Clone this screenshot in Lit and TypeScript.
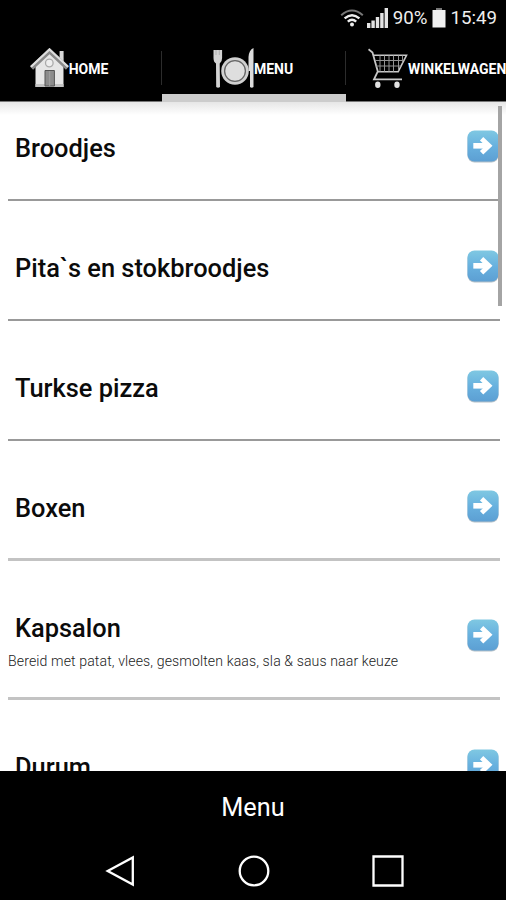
import { LitElement, html, css, svg } from "lit";
import { customElement } from "lit/decorators.js";
import { classMap } from "lit/directives/class-map.js";

interface MenuItem {
  title: string;
  description?: string;
  size: "first" | "normal" | "tall";
  soft?: boolean;
}

const ITEMS: MenuItem[] = [
  { title: "Broodjes", size: "first" },
  { title: "Pita`s en stokbroodjes", size: "normal" },
  { title: "Turkse pizza", size: "normal" },
  { title: "Boxen", size: "normal", soft: true },
  { title: "Kapsalon", description: "Bereid met patat, vlees, gesmolten kaas, sla & saus naar keuze", size: "tall", soft: true },
  { title: "Durum", size: "normal" },
];

const wifiIcon = html`<svg class="wifi" width="24" height="18" viewBox="0 0 24 18" fill="none">
  <path d="M1.2 6.2Q12-3.2 22.8 6.2" stroke="#777" stroke-width="2" />
  <path d="M4.6 9.4Q12 3 19.4 9.4" stroke="#eee" stroke-width="2.4" />
  <path d="M7.8 12.7Q12 9 16.2 12.7" stroke="#eee" stroke-width="2.4" />
  <circle cx="12" cy="15.4" r="2" fill="#eee" />
</svg>`;

const signalIcon = html`<svg class="signal" width="21" height="20" viewBox="0 0 21 20" fill="#e4e4e4">
  <path d="M0 15h3.400v5H0zM4.400 12.500h3.400V20H4.400zM8.800 9h3.400v11H8.800zM13.200 5h3.400v15h-3.400zM17.600 0H21v20h-3.400z" />
</svg>`;

const batteryIcon = html`<svg class="battery" width="14" height="20" viewBox="0 0 14 20">
  <path d="M4 0h6v2H4z" fill="#777" />
  <path d="M.5 2h13v17.500H.5z" fill="#f0f0f0" />
</svg>`;

const houseIcon = html`<svg width="39" height="40" viewBox="0 0 39 40">
  <path d="M29.600 3h4v11l-4-4z" fill="#d8d8d8" />
  <path d="M5.500 18L19.500 5l14 13v21h-28z" fill="#e6e6e6" />
  <path d="M5.500 36h28v3h-28z" fill="#c4c4c4" />
  <path d="M1.500 20L19.500 3l18 17" fill="none" stroke="#8a8a8a" stroke-width="4.600" />
  <path d="M1 18.800L19.500 1.500l18.500 17.300" fill="none" stroke="#dedede" stroke-width="2.200" />
  <circle cx="19.300" cy="15" r="3.800" fill="#eee" stroke="#aaa" stroke-width="1.300" />
  <path d="M15 22.500h9.400V38H15z" fill="#8c8c8c" stroke="#555" stroke-width="1" />
  <path d="M19.700 23v15" stroke="#a2a2a2" stroke-width="1" />
</svg>`;

const plateIcon = html`<svg width="41" height="41" viewBox="0 0 41 41">
  <path d="M.5 2h8.600v8q0 4-2.400 5.500L7 39q-2 1.600-3.800 0L3 15.500Q.5 14 .5 10z" fill="#d4d4d4" />
  <path d="M3 2v5M6.300 2v5" stroke="#999" stroke-width=".6" />
  <circle cx="22" cy="23" r="13.800" fill="#d0d0d0" />
  <circle cx="22" cy="23" r="10.400" fill="#dedede" stroke="#666" stroke-width="1.300" />
  <path d="M40.500 0v39q-1.700 1.600-3.500 0V23h-1.500V9Q36 2 40.500 0z" fill="#dcdcdc" />
</svg>`;

const cartIcon = html`<svg width="41" height="41" viewBox="0 0 41 41" fill="none" stroke="#c8c8c8">
  <path d="M.5 1.300L4.500 4.500l5.300 19-3.800 7.800h28" stroke-width="1.800" />
  <path d="M5 7.300h33.500l-8.300 16.400H10" stroke-width="1.600" />
  <path d="M7 12.500h28.500M8 18h25M12 7.500v16M16.500 7.500v16M21 7.500v16M25.500 7.500v16M30.500 7.500v15M34.500 7.500v7" stroke="#929292" stroke-width="1" />
  <ellipse cx="9.800" cy="36.800" rx="2.700" ry="3.200" fill="#e2e2e2" stroke="none" />
  <ellipse cx="29" cy="36.800" rx="2.700" ry="3.200" fill="#e2e2e2" stroke="none" />
</svg>`;

const arrowGlyph = svg`<path d="M6.300 15.800h15" stroke="#fff" stroke-width="5.600" />
  <path d="M14.600 8.800L22 15.800l-7.400 7" fill="none" stroke="#fff" stroke-width="4.800" />`;

@customElement("category-row")
export class CategoryRow extends LitElement {
  static properties = { item: { attribute: false } };
  declare item: MenuItem;

  static styles = css`
    :host { display: block; }
    .row {
      box-sizing: border-box;
      display: flex;
      justify-content: space-between;
      height: 119.8px;
      padding-top: 47px;
      border-bottom: 2px solid #999;
    }
    .first { height: 99.2px; padding-top: 26px; }
    .tall { height: 138.4px; }
    .soft { border-bottom: 3px solid #c3c3c3; }
    .soft:not(.tall) { height: 120.4px; }
    .title {
      padding-left: 7px;
      font-size: 25.4px;
      font-weight: 500;
      line-height: 40px;
      color: #0b0b0b;
      white-space: pre;
    }
    .description { font-size: 14.1px; line-height: 20px; margin-top: 3px; font-weight: 300; letter-spacing: 0.11px; color: #222; white-space: nowrap; }
    .arrow {
      flex: none;
      width: 32px;
      height: 33px;
      margin: 2px 1.5px 0 0;
    }
    .tall .arrow { margin-top: 11px; }
  `;

  render() {
    const { title, description, size, soft } = this.item;
    return html`<div class=${classMap({ row: true, [size]: true, soft: !!soft })}>
      <div class="text">
        <div class="title">${title}</div>
        ${description ? html`<div class="description">${description}</div>` : null}
      </div>
      <svg class="arrow" viewBox="0 0 32 33">
        <defs>
          <linearGradient id="blue" x1="0" y1="0" x2="0" y2="1">
            <stop offset="0" stop-color="#7fc8e2" />
            <stop offset=".5" stop-color="#68b1df" />
            <stop offset="1" stop-color="#5c9fd3" />
          </linearGradient>
        </defs>
        <rect x=".5" y="1.500" width="31" height="31" rx="7" fill="#b4c0c8" />
        <rect x=".5" y=".5" width="31" height="31" rx="7" fill="url(#blue)" />
        ${arrowGlyph}
      </svg>
    </div>`;
  }
}

@customElement("app-root")
export class AppRoot extends LitElement {
  static styles = css`
    :host {
      display: flex;
      flex-direction: column;
      width: 506px;
      height: 900px;
      overflow: hidden;
      background: #000;
      color: #fff;
      font-family: Roboto, "Liberation Sans", sans-serif;
    }
    .status {
      display: flex;
      flex: none;
      align-items: center;
      justify-content: flex-end;
      box-sizing: border-box;
      height: 36px;
      padding-right: 9px;
      font-size: 18.7px;
      color: #eee;
    }
    .wifi { margin-right: -1px; }
    .signal { margin: 0 5px 0 4px; }
    .battery { margin: 0 4px 0 5px; }
    .tabs { display: flex; flex: none; height: 66px; }
    .tab {
      box-sizing: border-box;
      display: flex;
      flex: none;
      align-items: center;
      justify-content: center;
      width: 184px;
      border-bottom: 1px solid #777;
      padding-bottom: 1px;
      font-size: 14px;
      font-weight: 700;
    }
    .home { width: 162px; padding-right: 24px; }
    .home .label { padding-top: 2px; }
    .menu { border-bottom: 8px solid #ccc; padding: 6px 2px 0 0; }
    .menu .label { padding-top: 1px; }
    .cart { padding: 0 0 0 22px; justify-content: flex-start; }
    .cart .label { margin-left: -1px; }
    .divider { flex: none; align-self: flex-start; width: 1px; height: 34px; margin: 15px 0 0 -1px; background: #2c2c2c; }
    .list {
      position: relative;
      flex: none;
      box-sizing: border-box;
      height: 669px;
      padding: 0 6px 0 8px;
      overflow: hidden;
      background: linear-gradient(#e6e6e6, #fff 13px) #fff;
    }
    .scrollbar { position: absolute; top: 4px; right: 4px; width: 4px; height: 200px; background: #a4a4a4; }
    .footer { flex: none; height: 71px; line-height: 73px; text-align: center; font-size: 25.3px; }
    .nav { display: flex; flex: none; height: 58px; align-items: center; justify-content: center; gap: 102px; padding-left: 2px; }
  `;

  render() {
    return html`
      <div class="status">
        ${wifiIcon}${signalIcon}<span>90%</span>${batteryIcon}<span>15:49</span>
      </div>
      <div class="tabs">
        <div class="tab home">${houseIcon}<span class="label">HOME</span></div>
        <div class="divider"></div>
        <div class="tab menu">${plateIcon}<span class="label">MENU</span></div>
        <div class="divider"></div>
        <div class="tab cart">${cartIcon}<span class="label">WINKELWAGEN</span></div>
      </div>
      <div class="list">
        ${ITEMS.map((item) => html`<category-row .item=${item}></category-row>`)}
        <div class="scrollbar"></div>
      </div>
      <div class="footer">Menu</div>
      <div class="nav">
        <svg width="32" height="34" viewBox="0 0 32 34"><path d="M28.800 3.500v27L3.700 17z" fill="none" stroke="#fff" stroke-width="2.300" /></svg>
        <svg width="32" height="34" viewBox="0 0 32 34"><circle cx="16" cy="17" r="14.300" fill="none" stroke="#fff" stroke-width="2.300" /></svg>
        <svg width="32" height="34" viewBox="0 0 32 34"><path d="M1.500 2.500h29v29h-29z" fill="none" stroke="#fff" stroke-width="2.300" /></svg>
      </div>
    `;
  }
}
